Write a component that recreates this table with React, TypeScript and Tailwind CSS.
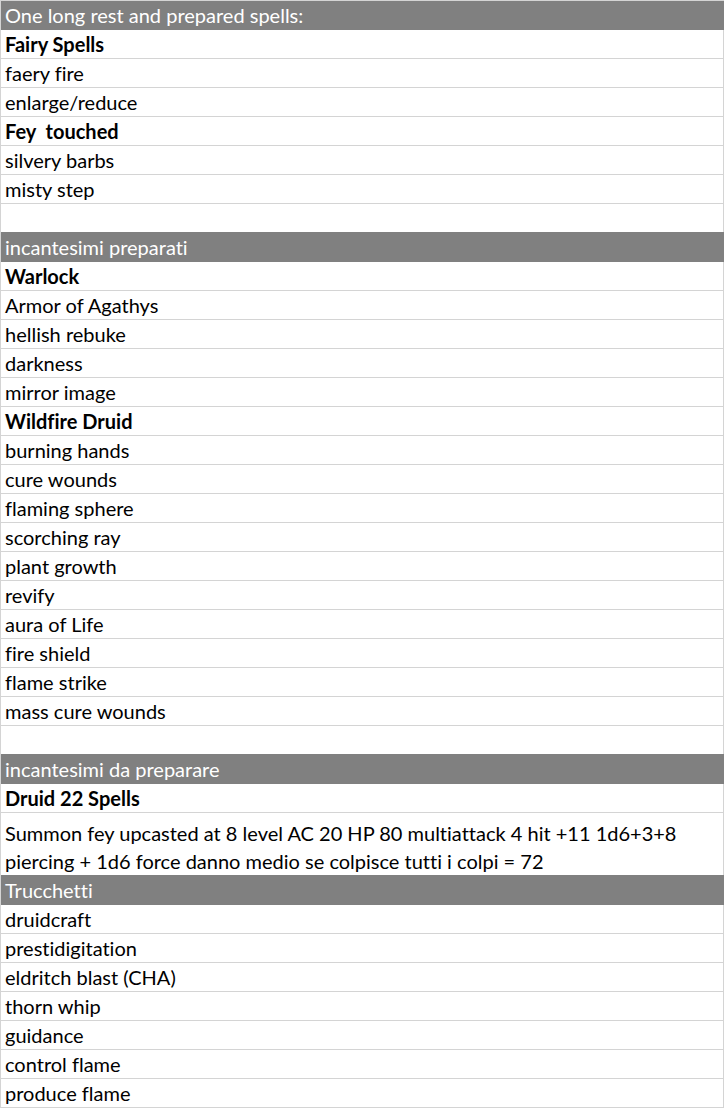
import React from "react";

type Row = { t: string; kind?: "h" | "b" | "n" | "e" | "wrap" };

const rows: Row[] = [
  { t: "One long rest and prepared spells:", kind: "h" },
  { t: "Fairy Spells", kind: "b" },
  { t: "faery fire" },
  { t: "enlarge/reduce" },
  { t: "Fey  touched", kind: "b" },
  { t: "silvery barbs" },
  { t: "misty step" },
  { t: "", kind: "e" },
  { t: "incantesimi preparati", kind: "h" },
  { t: "Warlock", kind: "b" },
  { t: "Armor of Agathys" },
  { t: "hellish rebuke" },
  { t: "darkness" },
  { t: "mirror image" },
  { t: "Wildfire Druid", kind: "b" },
  { t: "burning hands" },
  { t: "cure wounds" },
  { t: "flaming sphere" },
  { t: "scorching ray" },
  { t: "plant growth" },
  { t: "revify" },
  { t: "aura of Life" },
  { t: "fire shield" },
  { t: "flame strike" },
  { t: "mass cure wounds" },
  { t: "", kind: "e" },
  { t: "incantesimi da preparare", kind: "h" },
  { t: "Druid 22 Spells", kind: "b" },
  { t: "", kind: "wrap" },
  { t: "Trucchetti", kind: "h" },
  { t: "druidcraft" },
  { t: "prestidigitation" },
  { t: "eldritch blast (CHA)" },
  { t: "thorn whip" },
  { t: "guidance" },
  { t: "control flame" },
  { t: "produce flame" },
];

export default function App() {
  return (
    <div
      className="w-[724px] bg-white border-t border-l border-[#d4d4d4] text-black text-[20px] [font-variant-ligatures:none]"
      style={{ fontFamily: "Lato, 'Noto Sans', sans-serif" }}
    >
      {rows.map((r, i) => {
        if (r.kind === "h") {
          const first = i === 0;
          return (
            <div
              key={i}
              className={
                first
                  ? "h-[29px] bg-[#808080] border-b border-[#808080] text-white pl-[4px] leading-[28px] whitespace-pre"
                  : "-mt-px h-[30px] bg-[#808080] border-y border-[#808080] text-white pl-[4px] leading-[28px] whitespace-pre"
              }
            >
              {r.t}
            </div>
          );
        }
        if (r.kind === "wrap") {
          return (
            <div
              key={i}
              className="h-[63px] border-b border-r border-[#d4d4d4] pl-[4px] pt-[6px] leading-[28px] whitespace-nowrap"
            >
              Summon fey upcasted at 8 level AC 20 HP 80 multiattack 4 hit +11 1d6+3+8
              <br />
              piercing + 1d6 force danno medio se colpisce tutti i colpi = 72
            </div>
          );
        }
        return (
          <div
            key={i}
            className={
              "h-[29px] border-b border-r border-[#d4d4d4] pl-[4px] leading-[28px] whitespace-pre" +
              (r.kind === "b" ? " font-bold" : "")
            }
          >
            {r.t}
          </div>
        );
      })}
    </div>
  );
}
